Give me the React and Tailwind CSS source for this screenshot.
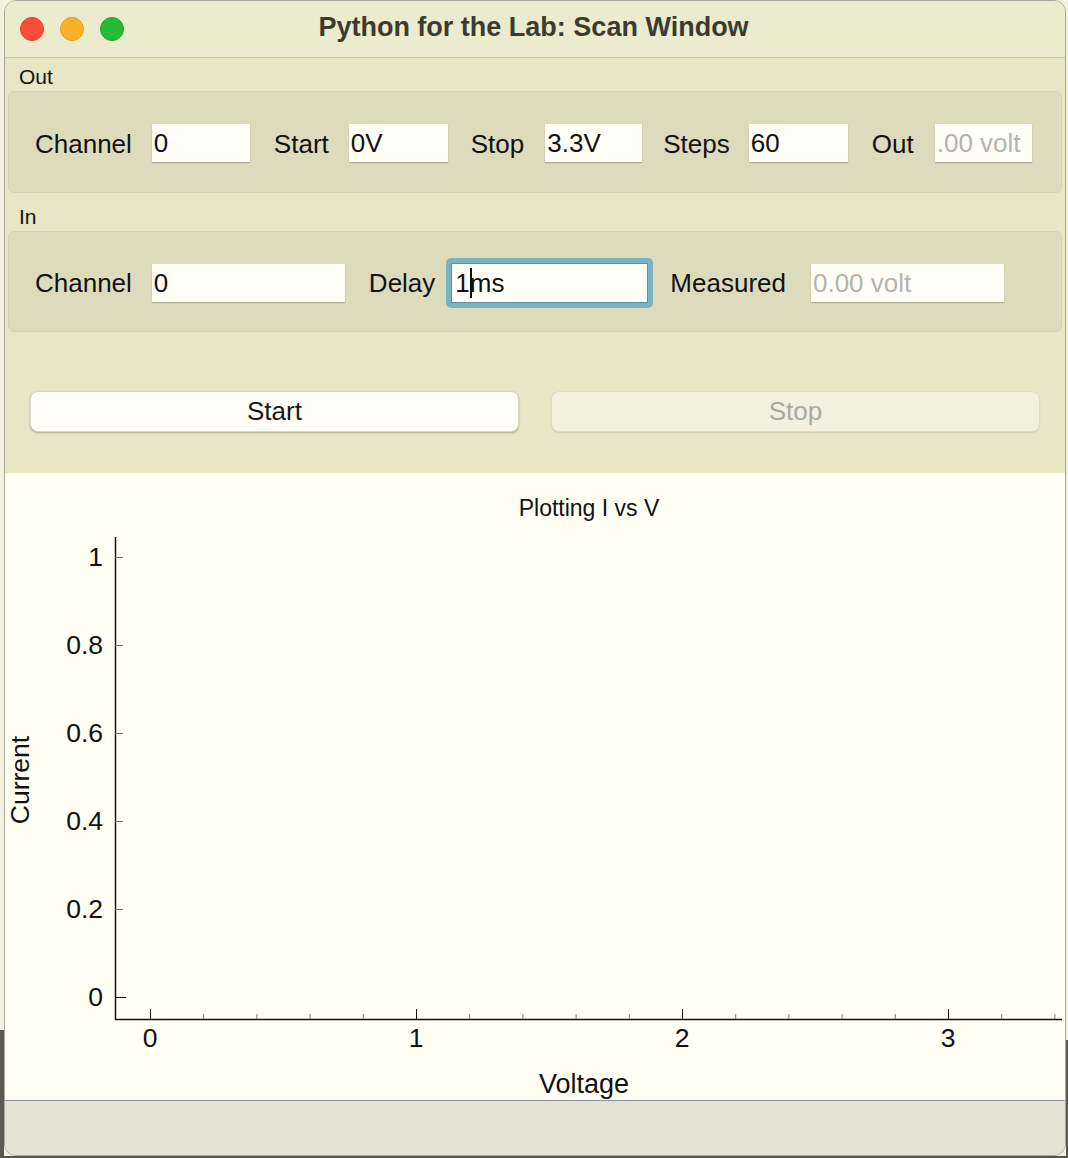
import React from "react";

const FONT = { fontFamily: '"Liberation Sans", Arial, sans-serif' };

function Field({ value, w, disabled }) {
  return (
    <div
      className={`h-[38px] bg-[#fffff8] shadow-[0_1px_1px_rgba(80,80,60,0.35)] flex items-center pl-[2px] pt-[1px] overflow-hidden whitespace-nowrap text-[26px] ${disabled ? "text-[#b4b4ac]" : "text-[#111]"}`}
      style={{ width: w }}
    >
      {value}
    </div>
  );
}

function Label({ children }) {
  return <span className="text-[26px] text-[#111] whitespace-nowrap pt-[2px]">{children}</span>;
}

function Chart() {
  const yTicks = [
    { v: "1", y: 84 },
    { v: "0.8", y: 172 },
    { v: "0.6", y: 260 },
    { v: "0.4", y: 348 },
    { v: "0.2", y: 436 },
    { v: "0", y: 524 },
  ];
  const major = [
    { v: "0", x: 145 },
    { v: "1", x: 411 },
    { v: "2", x: 677 },
    { v: "3", x: 943 },
  ];
  const minor = [];
  for (let i = 0; i <= 17; i++) {
    if (i % 5 === 0) continue;
    const x = 145 + i * 53.2;
    if (x < 1058) minor.push(x);
  }
  return (
    <svg width="1060" height="627" viewBox="0 0 1060 627" className="block" style={FONT}>
      <line x1="110.5" y1="64" x2="110.5" y2="546.5" stroke="#111" strokeWidth="1.5" />
      <line x1="110" y1="546.5" x2="1057" y2="546.5" stroke="#111" strokeWidth="1.5" />
      {yTicks.map((t) => (
        <g key={t.v}>
          <line x1="110" y1={t.y + 0.5} x2={t.v === "0" ? 121 : 118} y2={t.y + 0.5} stroke={t.v === "0" ? "#111" : "#777"} strokeWidth="1" />
          <text x="98" y={t.y} textAnchor="end" dominantBaseline="central" fontSize="26.5" fill="#111">
            {t.v}
          </text>
        </g>
      ))}
      {major.map((t) => (
        <g key={t.v}>
          <line x1={t.x + 0.5} y1="536" x2={t.x + 0.5} y2="546" stroke="#111" strokeWidth="1" />
          <text x={t.x} y="565" textAnchor="middle" dominantBaseline="central" fontSize="26.5" fill="#111">
            {t.v}
          </text>
        </g>
      ))}
      {minor.map((x) => (
        <line key={x} x1={x + 0.5} y1="541" x2={x + 0.5} y2="546" stroke="#777" strokeWidth="1" />
      ))}
      <text x="579" y="611" textAnchor="middle" dominantBaseline="central" fontSize="27" fill="#111">
        Voltage
      </text>
      <text
        x="15"
        y="307"
        textAnchor="middle"
        dominantBaseline="central"
        fontSize="26.5"
        fill="#111"
        transform="rotate(-90 15 307)"
      >
        Current
      </text>
    </svg>
  );
}

export default function App() {
  return (
    <div className="w-[1068px] h-[1158px] bg-[#f2f2de] flex flex-col relative overflow-hidden" style={FONT}>
      <div className="absolute left-0 top-[1030px] w-[4px] h-[128px] bg-[#5a5a50]" />
      <div className="absolute right-0 top-[1040px] w-[2px] h-[118px] bg-[#5a5a50]" />
      <div className="ml-[4px] w-[1062px] h-[1156px] rounded-[12px] border border-[#a8a898] overflow-hidden flex flex-col bg-[#e7e7c6] relative">
        {/* Title bar */}
        <div className="h-[57px] shrink-0 bg-[#ebebcd] border-b border-[#c4c4b0] grid grid-cols-[1fr_auto_1fr] items-center">
          <div className="flex items-center gap-[16px] pl-[15px]">
            <div className="w-[24px] h-[24px] rounded-full bg-[#fa4d3c] border border-[#e0402f]" />
            <div className="w-[24px] h-[24px] rounded-full bg-[#fbb12a] border border-[#e09c20]" />
            <div className="w-[24px] h-[24px] rounded-full bg-[#26bb35] border border-[#1ea42c]" />
          </div>
          <div className="text-[27px] font-bold text-[#3b3b2e] whitespace-nowrap pb-[4px] pr-[3px]">
            Python for the Lab: Scan Window
          </div>
          <div />
        </div>

        {/* Out group */}
        <div className="h-[33px] shrink-0 pt-[7px] pl-[14px] text-[21px] leading-[24px] text-[#111]">Out</div>
        <div className="h-[102px] shrink-0 mx-[3px] rounded-[6px] bg-[#dcdcbd] border border-[#d2d2b6] flex items-center pl-[26px] pt-[2px]">
          <Label>Channel</Label>
          <div className="w-[20px]" />
          <Field value="0" w={98} />
          <div className="w-[24px]" />
          <Label>Start</Label>
          <div className="w-[20px]" />
          <Field value="0V" w={99} />
          <div className="w-[23px]" />
          <Label>Stop</Label>
          <div className="w-[21px]" />
          <Field value="3.3V" w={97} />
          <div className="w-[21px]" />
          <Label>Steps</Label>
          <div className="w-[19px]" />
          <Field value="60" w={99} />
          <div className="w-[24px]" />
          <Label>Out</Label>
          <div className="w-[21px]" />
          <Field value=".00 volt" w={97} disabled />
        </div>

        {/* In group */}
        <div className="h-[38px] shrink-0 pt-[12px] pl-[14px] text-[21px] leading-[24px] text-[#111]">In</div>
        <div className="h-[101px] shrink-0 mx-[3px] rounded-[6px] bg-[#dcdcbd] border border-[#d2d2b6] flex items-center pl-[26px] pt-[2px]">
          <Label>Channel</Label>
          <div className="w-[20px]" />
          <Field value="0" w={193} />
          <div className="w-[24px]" />
          <Label>Delay</Label>
          <div className="w-[11px]" />
          <div className="p-[5px] rounded-[5px] bg-[#79b3c2]">
            <div className="w-[197px] h-[40px] bg-[#fffff8] border border-[#6a8a90] flex items-center pl-[3px] pt-[1px] text-[26px] text-[#111] whitespace-nowrap">
              1<span className="inline-block w-[2px] h-[30px] bg-[#111] -mr-[2px]" />ms
            </div>
          </div>
          <div className="w-[17px]" />
          <Label>Measured</Label>
          <div className="w-[25px]" />
          <Field value="0.00 volt" w={193} disabled />
        </div>

        {/* Buttons */}
        <div className="h-[141px] shrink-0 flex gap-[32px] px-[25px] pt-[59px]">
          <div className="flex-1 h-[41px] rounded-[8px] bg-[#fefef6] shadow-[0_1px_2px_rgba(60,60,40,0.35)] border border-[#d6d6c6] flex items-center justify-center text-[26px] text-[#1a1a1a]">
            Start
          </div>
          <div className="flex-1 h-[41px] rounded-[8px] bg-[#f1f1dd] border border-[#dcdccb] shadow-[0_1px_1px_rgba(60,60,40,0.12)] flex items-center justify-center text-[26px] text-[#a9a9a2]">
            Stop
          </div>
        </div>

        {/* Plot */}
        <div className="h-[627px] shrink-0 bg-[#fffff3] relative flex flex-col">
          <div className="absolute left-0 right-0 top-[18px] text-center text-[23px] text-[#111] pl-[108px]">
            Plotting I vs V
          </div>
          <Chart />
        </div>

        {/* Status bar */}
        <div className="flex-1 bg-[#e3e3d2] border-t border-[#8e8ea6]" />
      </div>
      <div className="flex-1 bg-[#55554c]" />
    </div>
  );
}
